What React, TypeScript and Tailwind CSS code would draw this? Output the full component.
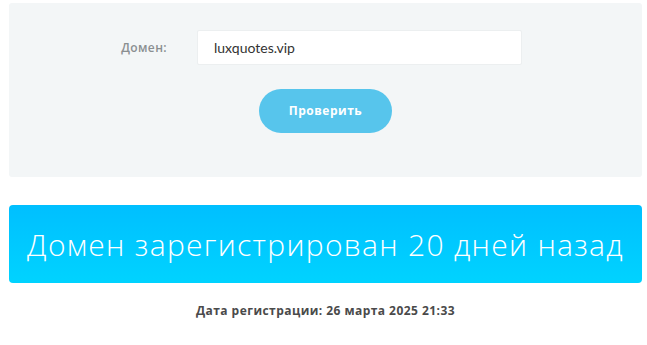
export default function App() {
    return (
        <div className="min-h-screen bg-white pt-[3px] font-['Open_Sans',sans-serif]">
            <div className="ml-[9px] mr-[5px] h-[174px] rounded-[3px] bg-[#f3f6f7] pt-[27px]">
                <div className="flex items-center">
                    <label className="w-[158px] text-right text-[12px] font-semibold tracking-[0.4px] text-[#8a8f91]">Домен:</label>
                    <div className="ml-[30px] flex h-[35px] w-[325px] items-center rounded-[2px] border border-[#eceff0] bg-white pl-[16px] text-[14px] text-[#333] font-['Lato',sans-serif]">
                        luxquotes.vip
                    </div>
                </div>
                <div className="mt-[24px] flex justify-center">
                    <button className="h-[44px] w-[133px] rounded-full bg-[#57c5ec] text-[12px] font-bold tracking-[0.5px] text-white">
                        Проверить
                    </button>
                </div>
            </div>

            <div className="ml-[9px] mr-[5px] mt-[28px] flex h-[78px] items-center justify-center rounded-[4px] bg-gradient-to-b from-[#00bfff] to-[#00d3ff]">
                <h1 className="text-[30px] font-light tracking-[1.3px] text-white">Домен зарегистрирован 20 дней назад</h1>
            </div>

            <p className="mt-[19px] pl-[4px] text-center text-[12px] font-bold tracking-[0.45px] text-[#4a4a4a]">
                Дата регистрации: 26 марта 2025 21:33
            </p>
        </div>
    );
}
